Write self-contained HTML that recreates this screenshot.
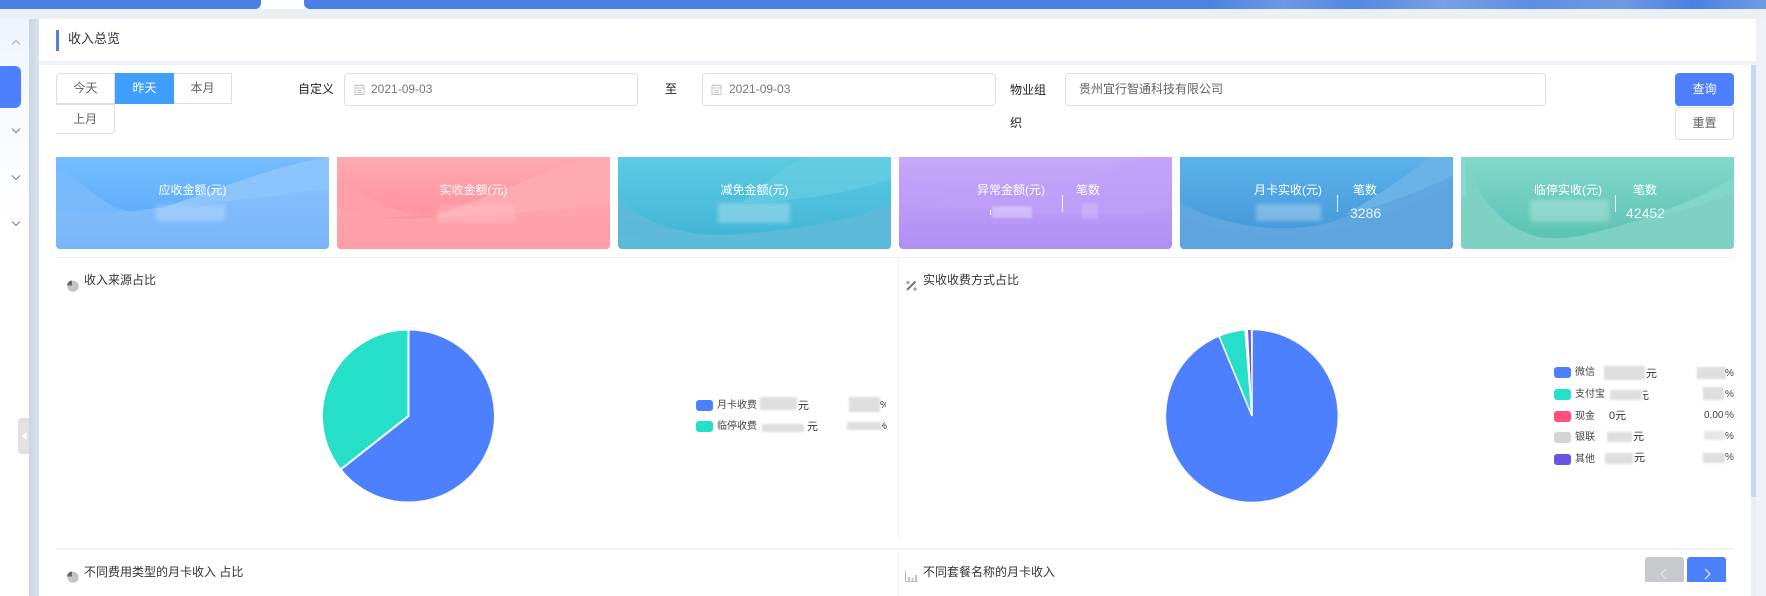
<!DOCTYPE html>
<html lang="zh">
<head>
<meta charset="utf-8">
<title>收入总览</title>
<style>
html,body{margin:0;padding:0;width:1766px;height:596px;overflow:hidden;background:#eef1f7}
body{position:relative;font-family:"Liberation Sans","Noto Sans CJK SC",sans-serif;font-size:12px;color:#333}
.a{position:absolute;box-sizing:border-box}
.t{position:absolute;white-space:nowrap;line-height:16px;height:16px}
.btn{position:absolute;box-sizing:border-box;border:1px solid #dcdfe6;background:#fff;color:#606266;text-align:center;font-size:12px}
.inp{position:absolute;box-sizing:border-box;border:1px solid #dcdfe6;border-radius:4px;background:#fff;height:33px;top:73px}
.card{position:absolute;top:157px;height:92px;width:273px;border-radius:0 0 4px 4px;overflow:hidden;color:#fff}
.card svg{position:absolute;left:0;top:0}
.card .t{color:#fff;top:25px}
.bl{position:absolute;filter:blur(2px)}
.gb{background:#dedede}
.sw{position:absolute;width:17px;height:11px;border-radius:3px}
.lg{position:absolute;font-size:10px;line-height:12px;color:#444;white-space:nowrap}
.lk{position:absolute;font-size:11px;line-height:12px;color:#333;white-space:nowrap}
.vd{position:absolute;width:1px;background:rgba(255,255,255,.9);top:38px;height:17px}
</style>
</head>
<body>
<svg width="0" height="0" style="position:absolute">
<defs>
<linearGradient id="g1" x1="0" y1="0" x2="0" y2="1"><stop offset="0" stop-color="#75bdff"/><stop offset="1" stop-color="#5fadfc"/></linearGradient>
<linearGradient id="g1b" x1="0" y1="0" x2="0" y2="1"><stop offset="0" stop-color="#85bffd"/><stop offset="1" stop-color="#78b5f8"/></linearGradient>
<linearGradient id="g2" x1="0" y1="0" x2="0" y2="1"><stop offset="0" stop-color="#ffa9b0"/><stop offset="1" stop-color="#ff929d"/></linearGradient>
<linearGradient id="g2b" x1="0" y1="0" x2="0" y2="1"><stop offset="0" stop-color="#ffa3ab"/><stop offset="1" stop-color="#ff9da6"/></linearGradient>
<linearGradient id="g3" x1="0" y1="0" x2="0" y2="1"><stop offset="0" stop-color="#5ccbe3"/><stop offset="1" stop-color="#43b6d6"/></linearGradient>
<linearGradient id="g4" x1="0" y1="0" x2="0" y2="1"><stop offset="0" stop-color="#c6a9f9"/><stop offset="1" stop-color="#b08ff4"/></linearGradient>
<linearGradient id="g5" x1="0" y1="0" x2="0" y2="1"><stop offset="0" stop-color="#5bb2eb"/><stop offset="1" stop-color="#479ada"/></linearGradient>
<linearGradient id="g6" x1="0" y1="0" x2="0" y2="1"><stop offset="0" stop-color="#84d8cc"/><stop offset="1" stop-color="#5ac3b4"/></linearGradient>
</defs>
</svg>

<!-- top bar -->
<div class="a" style="left:0;top:0;width:1766px;height:21px;background:linear-gradient(#e4eef2,#eef1f4)"></div>
<div class="a" style="left:0;top:0;width:261px;height:9px;background:#4a7fe3;border-radius:0 0 6px 0"></div>
<div class="a" style="left:261px;top:0;width:43px;height:9px;background:#fff"></div>
<div class="a" style="left:304px;top:0;width:1462px;height:9px;border-radius:0 0 0 6px;background:linear-gradient(90deg,#4a7fe3 0,#4a7fe3 42%,#4c82e2 62%,#6d98e4 67%,#5388e2 72%,#7a9fe5 78%,#5d8ee3 84%,#6f9ae4 90%,#4a80e4 95%,#6f9ce5 100%)"></div>

<!-- sidebar -->
<div class="a" style="left:0;top:19px;width:29px;height:577px;background:linear-gradient(#eef4fd 0,#f6f9fe 14%,#fff 35%)"></div>
<div class="a" style="left:29px;top:19px;width:10px;height:577px;background:linear-gradient(90deg,#c9d6e2,#dbe3ea)"></div>
<div class="a" style="left:0;top:66px;width:21px;height:42px;background:#4d80ff;border-radius:0 6px 6px 0"></div>
<svg class="a" style="left:11px;top:39px" width="10" height="7" viewBox="0 0 10 7"><path d="M1 5.500 5 1.500 9 5.500" fill="none" stroke="#a0a5ae" stroke-width="1"/></svg>
<svg class="a" style="left:11px;top:127px" width="10" height="7" viewBox="0 0 10 7"><path d="M1 1.500 5 5.500 9 1.500" fill="none" stroke="#7a7f89" stroke-width="1"/></svg>
<svg class="a" style="left:11px;top:174px" width="10" height="7" viewBox="0 0 10 7"><path d="M1 1.500 5 5.500 9 1.500" fill="none" stroke="#7a7f89" stroke-width="1"/></svg>
<svg class="a" style="left:11px;top:220px" width="10" height="7" viewBox="0 0 10 7"><path d="M1 1.500 5 5.500 9 1.500" fill="none" stroke="#7a7f89" stroke-width="1"/></svg>
<div class="a" style="left:18px;top:418px;width:11px;height:36px;background:#e2e2e2;border-radius:3px 0 0 3px"></div>
<svg class="a" style="left:21px;top:431px" width="6" height="10" viewBox="0 0 6 10"><path d="M5.500 1 .8 5 5.500 9z" fill="#fff"/></svg>

<!-- header -->
<div class="a" style="left:39px;top:19px;width:1717px;height:42px;background:#fff"></div>
<div class="a" style="left:56px;top:30px;width:3px;height:21px;background:#5180e8"></div>
<div class="t" style="left:68px;top:31px;font-size:13px;color:#333">收入总览</div>

<!-- body -->
<div class="a" style="left:39px;top:61px;width:1717px;height:4px;background:#f1f3f8"></div>
<div class="a" style="left:39px;top:65px;width:1712px;height:531px;background:#fff"></div>
<div class="a" style="left:1751px;top:65px;width:5px;height:531px;background:#e9edf5"></div>
<div class="a" style="left:1751px;top:65px;width:5px;height:432px;background:#c8d7f0"></div>

<!-- filters -->
<div class="btn" style="left:56px;top:73px;width:59px;height:31px;line-height:29px;border-radius:4px 0 0 0">今天</div>
<div class="btn" style="left:115px;top:73px;width:59px;height:31px;line-height:29px;background:#409eff;border-color:#409eff;color:#fff">昨天</div>
<div class="btn" style="left:174px;top:73px;width:58px;height:31px;line-height:29px;border-left:0">本月</div>
<div class="btn" style="left:56px;top:104px;width:59px;height:30px;line-height:28px;border-radius:0 0 4px 0;border-left:0">上月</div>

<div class="t" style="left:298px;top:81px;color:#222">自定义</div>
<div class="inp" style="left:344px;width:294px"></div>
<svg class="a" style="left:354px;top:83px" width="11" height="12" viewBox="0 0 11 12"><path d="M1 2.500h9v9H1zM1 5h9M3 1v2M8 1v2M3 7.500h5M3 9.500h5" fill="none" stroke="#c0c4cc" stroke-width="1"/></svg>
<div class="t" style="left:371px;top:81px;color:#777">2021-09-03</div>

<div class="t" style="left:665px;top:81px;color:#222">至</div>
<div class="inp" style="left:702px;width:294px"></div>
<svg class="a" style="left:711px;top:83px" width="11" height="12" viewBox="0 0 11 12"><path d="M1 2.500h9v9H1zM1 5h9M3 1v2M8 1v2M3 7.500h5M3 9.500h5" fill="none" stroke="#c0c4cc" stroke-width="1"/></svg>
<div class="t" style="left:729px;top:81px;color:#777">2021-09-03</div>

<div class="t" style="left:1010px;top:82px;color:#222">物业组</div>
<div class="t" style="left:1010px;top:115px;color:#222">织</div>
<div class="inp" style="left:1065px;width:481px"></div>
<div class="t" style="left:1079px;top:81px;color:#606266">贵州宜行智通科技有限公司</div>

<div class="btn" style="left:1675px;top:73px;width:59px;height:33px;line-height:31px;background:#4d7fff;border-color:#4d7fff;color:#fff;border-radius:4px">查询</div>
<div class="btn" style="left:1675px;top:107px;width:59px;height:33px;line-height:31px;border-radius:4px">重置</div>

<!-- cards -->
<div class="card" style="left:56px;background:#80bbfb">
<svg width="273" height="92" viewBox="0 0 273 92"><rect width="273" height="58" fill="url(#g1)"/>
<path d="M0 12C30 24 48 54 82 56L0 60z" fill="#78bbfd"/>
<path d="M92 56C150 36 220 8 273 0V60H92z" fill="#8cc4fd"/>
<path d="M0 54C30 58 62 57 92 52 150 46 220 40 273 31V92H0z" fill="url(#g1b)"/></svg>
<div class="t" style="left:0;width:273px;text-align:center">应收金额(元)</div>
<div class="bl" style="left:100px;top:48px;width:69px;height:16px;background:rgba(255,255,255,.24)"></div>
</div>
<div class="card" style="left:337px;background:#ffa0a9">
<svg width="273" height="92" viewBox="0 0 273 92"><rect width="273" height="62" fill="url(#g2)"/>
<path d="M0 22C30 42 55 56 92 58L0 64z" fill="#ffa0a9"/>
<path d="M100 58C150 40 215 12 250 0H273V60H100z" fill="#ffa9b0"/>
<path d="M0 50C30 62 62 64 100 60 150 58 220 54 273 47V92H0z" fill="url(#g2b)"/></svg>
<div class="t" style="left:0;width:273px;text-align:center">实收金额(元)</div>
<div class="bl" style="left:100px;top:48px;width:78px;height:18px;background:rgba(255,255,255,.15)"></div>
</div>
<div class="card" style="left:618px;background:#5dbbd9">
<svg width="273" height="92" viewBox="0 0 273 92"><rect width="273" height="92" fill="#5dbbd9"/>
<path d="M0 80C20 76 40 74 57 70L0 60z" fill="#5cb8d7"/>
<path d="M0 0H273V48C230 62 170 78 101 78 60 78 20 62 0 42z" fill="url(#g3)"/>
<path d="M190 0C165 8 150 25 125 45 180 45 235 35 273 22V0z" fill="#6bcfe4" opacity=".55"/>
<path d="M57 72C30 75 14 78 0 81V92H273V50C230 62 170 76 101 78 85 78 70 76 57 72z" fill="#5dbad8"/></svg>
<div class="t" style="left:0;width:273px;text-align:center">减免金额(元)</div>
<div class="bl" style="left:100px;top:46px;width:72px;height:20px;background:rgba(255,255,255,.28)"></div>
</div>
<div class="card" style="left:899px">
<svg width="273" height="92" viewBox="0 0 273 92"><rect width="273" height="92" fill="url(#g4)"/>
<path d="M0 18C50 40 100 48 150 34 195 20 225 6 245 0H273V54C190 60 90 56 0 46z" fill="#bfa0f8" opacity=".6"/></svg>
<div class="t" style="left:78px">异常金额(元)</div>
<div class="t" style="left:177px">笔数</div>
<div class="vd" style="left:163px"></div>
<div class="a" style="left:91px;top:53px;width:1px;height:5px;background:#fff"></div>
<div class="bl" style="left:93px;top:49px;width:40px;height:12px;background:rgba(255,255,255,.32);filter:blur(1px)"></div>
<div class="bl" style="left:183px;top:46px;width:16px;height:16px;background:rgba(255,255,255,.18);filter:blur(1px)"></div>
</div>
<div class="card" style="left:1180px;background:#5ea5df">
<svg width="273" height="92" viewBox="0 0 273 92"><rect width="273" height="92" fill="#60a6e0"/>
<path d="M0 0H273V6C230 30 190 50 165 60 130 76 60 78 0 46z" fill="url(#g5)"/>
<path d="M250 0C225 20 195 40 165 58 190 52 240 36 273 18V0z" fill="#69b3e8"/>
<path d="M0 58C40 80 120 84 180 66 220 54 250 40 273 28V92H0z" fill="#5ea4de"/></svg>
<div class="t" style="left:74px">月卡实收(元)</div>
<div class="t" style="left:173px">笔数</div>
<div class="vd" style="left:157px"></div>
<div class="bl" style="left:76px;top:47px;width:65px;height:17px;background:rgba(255,255,255,.28)"></div>
<div class="t" style="left:170px;top:48px;font-size:14px;color:#e9f4fc">3286</div>
</div>
<div class="card" style="left:1461px;background:#7cd0c1">
<svg width="273" height="92" viewBox="0 0 273 92"><rect width="273" height="92" fill="#7ed1c3"/>
<path d="M5 0H273V20C240 40 204 58 131 76 110 82 90 82 77 80 40 70 15 40 5 0z" fill="url(#g6)"/>
<path d="M273 20C240 42 200 56 170 62 210 60 245 46 273 36z" fill="#82d6ca"/>
<rect width="5" height="40" fill="#87d9cf"/></svg>
<div class="t" style="left:73px">临停实收(元)</div>
<div class="t" style="left:172px">笔数</div>
<div class="vd" style="left:154px"></div>
<div class="bl" style="left:69px;top:43px;width:79px;height:22px;background:rgba(255,255,255,.26)"></div>
<div class="t" style="left:165px;top:48px;font-size:14px;color:#e9f8f5">42452</div>
</div>

<!-- dividers -->
<div class="a" style="left:56px;top:257px;width:1678px;height:1px;background:#f0f2f5"></div>
<div class="a" style="left:898px;top:258px;width:1px;height:282px;background:#f2f3f6"></div>
<div class="a" style="left:56px;top:548px;width:1678px;height:2px;background:#f1f3f8"></div>
<div class="a" style="left:898px;top:550px;width:1px;height:46px;background:#f2f3f6"></div>

<!-- section titles -->
<svg class="a" style="left:66px;top:279px" width="13" height="13" viewBox="0 0 13 13"><circle cx="7" cy="7.200" r="5.600" fill="#c4c4c4"/><path d="M6 1.500V6.500H1A5 5 0 0 1 6 1.500z" fill="#666"/></svg>
<div class="t" style="left:84px;top:272px;color:#333">收入来源占比</div>
<svg class="a" style="left:905px;top:279px" width="13" height="13" viewBox="0 0 13 13"><path d="M2 11 10.500 2.500" stroke="#777" stroke-width="2"/><circle cx="3" cy="3.500" r="1.800" fill="#aaa"/><circle cx="10" cy="10" r="1.800" fill="#aaa"/></svg>
<div class="t" style="left:923px;top:272px;color:#333">实收收费方式占比</div>
<svg class="a" style="left:66px;top:570px" width="13" height="13" viewBox="0 0 13 13"><circle cx="7" cy="7.200" r="5.600" fill="#c4c4c4"/><path d="M6 1.500V6.500H1A5 5 0 0 1 6 1.500z" fill="#666"/></svg>
<div class="t" style="left:84px;top:564px;color:#333">不同费用类型的月卡收入 占比</div>
<svg class="a" style="left:905px;top:570px" width="13" height="12" viewBox="0 0 13 12"><path d="M.5 1V11.500H13" fill="none" stroke="#bbb"/><path d="M3 7h2v4H3zM6.500 8h2v3h-2zM10 5h2v6h-2z" fill="#c4c4c4"/></svg>
<div class="t" style="left:923px;top:564px;color:#333">不同套餐名称的月卡收入</div>

<!-- pie 1 -->
<svg class="a" style="left:300px;top:310px" width="220" height="210" viewBox="300 310 220 210">
<path d="M408.500 416V329.500A86.500 86.500 0 1 1 340.500 469.500z" fill="#4d80ff" stroke="#fff" stroke-width="2"/>
<path d="M408.500 416L340.500 469.500A86.500 86.500 0 0 1 408.500 329.500z" fill="#26dfc8" stroke="#fff" stroke-width="2"/>
</svg>
<!-- pie 2 -->
<svg class="a" style="left:1150px;top:310px" width="210" height="210" viewBox="1150 310 210 210">
<path d="M1252 416V329.500A86.500 86.500 0 1 1 1219 336z" fill="#4d80ff" stroke="#fff" stroke-width="1.500"/>
<path d="M1252 416L1219 336A86.500 86.500 0 0 1 1245 329.800z" fill="#26dfc8" stroke="#fff" stroke-width="1.500"/>
<path d="M1252 416L1247.600 329.600A86.500 86.500 0 0 1 1251.200 329.500z" fill="#6a55e0" stroke="#fff" stroke-width=".8"/>
</svg>

<!-- legend 1 -->
<div class="sw" style="left:696px;top:400px;background:#4d80ff"></div>
<div class="lg" style="left:717px;top:400px">月卡收费</div>
<div class="bl gb" style="left:760px;top:397px;width:37px;height:13px;filter:blur(1px)"></div>
<div class="lk" style="left:798px;top:400px">元</div>
<div class="bl gb" style="left:849px;top:397px;width:31px;height:15px;filter:blur(1px)"></div>
<div class="lk" style="left:880px;top:400px;width:6px;overflow:hidden;font-size:10px">%</div>
<div class="sw" style="left:696px;top:421px;background:#26dfc8"></div>
<div class="lg" style="left:717px;top:421px">临停收费</div>
<div class="bl gb" style="left:762px;top:424px;width:42px;height:8px;filter:blur(1px)"></div>
<div class="lk" style="left:807px;top:421px">元</div>
<div class="bl gb" style="left:847px;top:422px;width:35px;height:8px;filter:blur(1px)"></div>
<div class="lk" style="left:882px;top:421px;width:5px;overflow:hidden;font-size:10px;direction:rtl">%</div>

<!-- legend 2 -->
<div class="sw" style="left:1554px;top:367px;background:#4d80ff"></div>
<div class="lg" style="left:1575px;top:367px">微信</div>
<div class="bl gb" style="left:1604px;top:366px;width:41px;height:14px;filter:blur(1px)"></div>
<div class="lk" style="left:1646px;top:368px">元</div>
<div class="bl gb" style="left:1697px;top:367px;width:29px;height:12px;filter:blur(1px)"></div>
<div class="lg" style="left:1725px;top:368px;color:#444">%</div>

<div class="sw" style="left:1554px;top:389px;background:#26dfc8"></div>
<div class="lg" style="left:1575px;top:389px">支付宝</div>
<div class="bl gb" style="left:1610px;top:390px;width:32px;height:10px;filter:blur(1px)"></div>
<div class="lk" style="left:1643px;top:390px;width:6px;overflow:hidden;direction:rtl">元</div>
<div class="bl gb" style="left:1703px;top:387px;width:21px;height:13px;filter:blur(1px)"></div>
<div class="lg" style="left:1725px;top:389px;color:#444">%</div>

<div class="sw" style="left:1554px;top:411px;background:#ff4f7a"></div>
<div class="lg" style="left:1575px;top:411px">现金</div>
<div class="lk" style="left:1609px;top:410px">0元</div>
<div class="lk" style="left:1704px;top:410px;font-size:10px;color:#444">0.00</div>
<div class="lg" style="left:1725px;top:410px;color:#444">%</div>

<div class="sw" style="left:1554px;top:432px;background:#d4d4d4"></div>
<div class="lg" style="left:1575px;top:432px">银联</div>
<div class="bl gb" style="left:1607px;top:432px;width:25px;height:10px;filter:blur(1px)"></div>
<div class="lk" style="left:1633px;top:431px">元</div>
<div class="bl gb" style="left:1704px;top:431px;width:21px;height:9px;filter:blur(1px);background:#e6e6e6"></div>
<div class="lg" style="left:1725px;top:431px;color:#444">%</div>

<div class="sw" style="left:1554px;top:454px;background:#6a55e0"></div>
<div class="lg" style="left:1575px;top:454px">其他</div>
<div class="bl gb" style="left:1605px;top:453px;width:28px;height:11px;filter:blur(1px)"></div>
<div class="lk" style="left:1634px;top:452px">元</div>
<div class="bl gb" style="left:1703px;top:453px;width:22px;height:10px;filter:blur(1px)"></div>
<div class="lg" style="left:1725px;top:452px;color:#444">%</div>

<!-- pager -->
<div class="a" style="left:1645px;top:557px;width:39px;height:25px;background:#c8c9cc;border-radius:3px 3px 0 0"></div>
<svg class="a" style="left:1660px;top:568px" width="7" height="12" viewBox="0 0 7 12"><path d="M6 1 1 6 6 11" fill="none" stroke="#e8e8ea" stroke-width="1"/></svg>
<div class="a" style="left:1687px;top:557px;width:39px;height:25px;background:#4d80ff;border-radius:3px 3px 0 0"></div>
<svg class="a" style="left:1704px;top:568px" width="7" height="12" viewBox="0 0 7 12"><path d="M1 1 6 6 1 11" fill="none" stroke="#fff" stroke-width="1"/></svg>
</body>
</html>
